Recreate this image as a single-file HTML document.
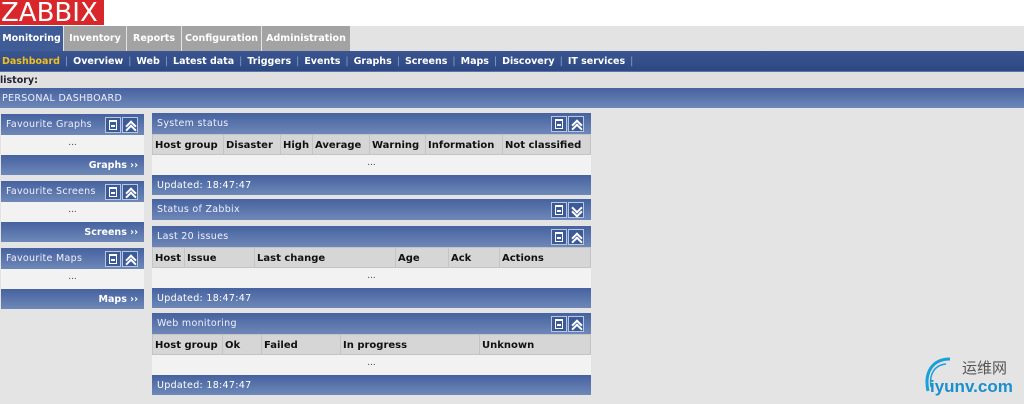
<!DOCTYPE html><html><head><meta charset="utf-8"><style>
*{margin:0;padding:0;box-sizing:border-box}
body{width:1024px;height:404px;background:#e4e4e4;font-family:"DejaVu Sans","Liberation Sans",sans-serif;font-size:10px;position:relative;overflow:hidden}
.a{position:absolute}
.logo{left:0;top:0;width:104px;height:25px;background:#d8262a;color:#fff;font:26px/27px "DejaVu Sans",sans-serif;padding-left:1px}
.top{left:0;top:0;width:1024px;height:26px;background:#fff}
.tabs{left:0;top:26px;width:1024px;height:25px;background:#e3e3e3}
.tab{position:absolute;top:26px;height:25px;background:#a3a3a3;color:#fff;font-weight:bold;font-size:9.5px;line-height:26px;text-align:center}
.sub{left:0;top:51px;width:1024px;height:21px;background:linear-gradient(#3b5590,#2c4882);border-bottom:1px solid #5a74a8;color:#fff;font-weight:bold;font-size:9.5px;line-height:22px;white-space:nowrap}
.sub span{margin:0 5px}.sub i{font-style:normal;color:#8aa0c8;font-weight:normal}
.hist{left:0;top:72px;width:1024px;height:16px;background:#e0e0e0;color:#223;font-weight:bold;font-size:9.5px;line-height:17px}
.bar{background:linear-gradient(#46629f,#6e88b8);color:#fff}
.hdr{height:21px;line-height:22px;font-size:9.5px;padding-left:5px;letter-spacing:.3px;color:#f0f0ff}
.ic{position:absolute;top:3px;width:16px;height:16px;border:1px solid #b8c6e0;background:#3d5a98}
.ic1:after{content:"";position:absolute;left:3px;top:2px;width:8px;height:10px;border:1.5px solid #fff;border-top-width:2.5px;box-sizing:border-box}
.ic1:before{content:"";position:absolute;left:5px;top:7px;width:4px;height:1.5px;background:#fff}
.ic2:after{content:"";position:absolute;left:4px;top:4px;width:6px;height:6px;border-left:2px solid #fff;border-top:2px solid #fff;transform:rotate(45deg)}
.ic2:before{content:"";position:absolute;left:4px;top:8px;width:6px;height:6px;border-left:2px solid #fff;border-top:2px solid #fff;transform:rotate(45deg)}
.dn:after{transform:rotate(225deg);top:1px}.dn:before{transform:rotate(225deg);top:5px}
.dots{background:#f2f2f2;height:20px;text-align:center;line-height:16px;color:#444;font-size:9px}
.foot{height:20px;line-height:21px;text-align:right;padding-right:6px;font-weight:bold;font-size:9.5px}
.upd{height:20px;line-height:21px;padding-left:5px;font-size:9.5px;letter-spacing:.3px}
table{border-collapse:collapse;width:100%}
th{background:#d6d6d6;border:1px solid #c4c4c4;height:20px;text-align:left;padding-left:2px;padding-top:1px;font-size:10px;font-weight:bold;color:#111;white-space:nowrap}
</style></head><body>
<div class="a top"></div>
<div class="a logo">ZABBIX</div>
<div class="a tabs"></div>
<div class="tab" style="left:0;width:63px;background:#3f5c96">Monitoring</div>
<div class="tab" style="left:64px;width:62px">Inventory</div>
<div class="tab" style="left:127px;width:54px">Reports</div>
<div class="tab" style="left:182px;width:79px">Configuration</div>
<div class="tab" style="left:262px;width:88px">Administration</div>
<div class="a sub"><span style="color:#f0c020;margin-left:2px">Dashboard</span><i>|</i><span>Overview</span><i>|</i><span>Web</span><i>|</i><span>Latest data</span><i>|</i><span>Triggers</span><i>|</i><span>Events</span><i>|</i><span>Graphs</span><i>|</i><span>Screens</span><i>|</i><span>Maps</span><i>|</i><span>Discovery</span><i>|</i><span>IT services</span><i>|</i></div>
<div class="a hist">listory:</div>
<div class="a bar hdr" style="left:0;top:88px;width:1024px;height:20px;line-height:21px;padding-left:2px">PERSONAL DASHBOARD</div>

<div class="a" style="left:1px;top:114px;width:143px">
<div class="bar hdr" style="position:relative">Favourite Graphs<div class="ic ic1" style="left:104px"></div><div class="ic ic2" style="left:121px"></div></div>
<div class="dots">...</div><div class="bar foot">Graphs ››</div></div>
<div class="a" style="left:1px;top:181px;width:143px">
<div class="bar hdr" style="position:relative">Favourite Screens<div class="ic ic1" style="left:104px"></div><div class="ic ic2" style="left:121px"></div></div>
<div class="dots">...</div><div class="bar foot">Screens ››</div></div>
<div class="a" style="left:1px;top:248px;width:143px">
<div class="bar hdr" style="position:relative">Favourite Maps<div class="ic ic1" style="left:104px"></div><div class="ic ic2" style="left:121px"></div></div>
<div class="dots">...</div><div class="bar foot">Maps ››</div></div>

<div class="a" style="left:152px;top:113px;width:439px">
<div class="bar hdr" style="position:relative">System status<div class="ic ic1" style="left:399px"></div><div class="ic ic2" style="left:416px"></div></div>
<table><tr><th style="width:71px">Host group</th><th style="width:57px">Disaster</th><th style="width:32px">High</th><th style="width:57px">Average</th><th style="width:56px">Warning</th><th style="width:77px">Information</th><th>Not classified</th></tr></table>
<div class="dots">...</div><div class="bar upd">Updated: 18:47:47</div></div>

<div class="a" style="left:152px;top:199px;width:439px">
<div class="bar hdr" style="position:relative">Status of Zabbix<div class="ic ic1" style="left:399px"></div><div class="ic ic2 dn" style="left:416px"></div></div></div>

<div class="a" style="left:152px;top:226px;width:439px">
<div class="bar hdr" style="position:relative">Last 20 issues<div class="ic ic1" style="left:399px"></div><div class="ic ic2" style="left:416px"></div></div>
<table><tr><th style="width:32px">Host</th><th style="width:70px">Issue</th><th style="width:141px">Last change</th><th style="width:53px">Age</th><th style="width:51px">Ack</th><th>Actions</th></tr></table>
<div class="dots">...</div><div class="bar upd">Updated: 18:47:47</div></div>

<div class="a" style="left:152px;top:313px;width:439px">
<div class="bar hdr" style="position:relative">Web monitoring<div class="ic ic1" style="left:399px"></div><div class="ic ic2" style="left:416px"></div></div>
<table><tr><th style="width:70px">Host group</th><th style="width:39px">Ok</th><th style="width:79px">Failed</th><th style="width:139px">In progress</th><th>Unknown</th></tr></table>
<div class="dots">...</div><div class="bar upd">Updated: 18:47:47</div></div>

<svg class="a" style="left:920px;top:355px" width="40" height="48" viewBox="0 0 40 48"><path d="M30 4 C12 4 4 18 8 36" stroke="#1a9fd8" stroke-width="3" fill="none"/><path d="M26 9 C14 10 9 20 11 32" stroke="#1a9fd8" stroke-width="1.5" fill="none"/></svg>
<div class="a" style="left:962px;top:357px;font:15px 'Noto Sans CJK SC',sans-serif;color:#555">运维网</div>
<div class="a" style="left:930px;top:377px;font:bold 17px 'Liberation Sans',sans-serif;color:#1a8fd0">iyunv.com</div>
</body></html>
